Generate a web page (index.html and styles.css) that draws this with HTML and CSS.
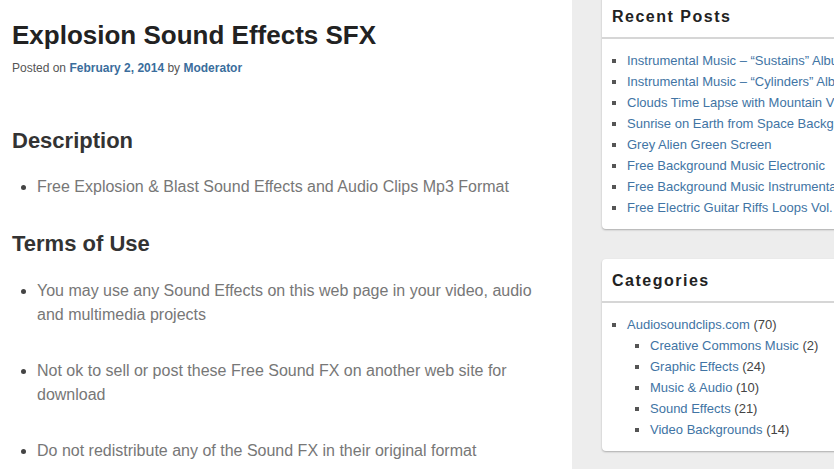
FILE: index.html
```html
<!DOCTYPE html>
<html lang="en">
<head>
<meta charset="utf-8">
<title>Explosion Sound Effects SFX</title>
<link rel="stylesheet" href="styles.css">
</head>
<body>
<div class="page">
  <main class="content">
    <h1 class="entry-title">Explosion Sound Effects SFX</h1>
    <div class="entry-meta">Posted on <a href="#">February 2, 2014</a> by <a href="#">Moderator</a></div>
    <h2 class="section-title">Description</h2>
    <ul class="entry-list">
      <li>Free Explosion &amp; Blast Sound Effects and Audio Clips Mp3 Format</li>
    </ul>
    <h2 class="section-title terms">Terms of Use</h2>
    <ul class="entry-list terms-list">
      <li>You may use any Sound Effects on this web page in your video, audio and multimedia projects</li>
      <li>Not ok to sell or post these Free Sound FX on another web site for download</li>
      <li>Do not redistribute any of the Sound FX in their original format</li>
    </ul>
  </main>
  <aside class="sidebar">
    <section class="widget first">
      <h3 class="widget-title">Recent Posts</h3>
      <ul class="widget-list">
        <li><a href="#">Instrumental Music – “Sustains” Album</a></li>
        <li><a href="#">Instrumental Music – “Cylinders” Album</a></li>
        <li><a href="#">Clouds Time Lapse with Mountain View</a></li>
        <li><a href="#">Sunrise on Earth from Space Background</a></li>
        <li><a href="#">Grey Alien Green Screen</a></li>
        <li><a href="#">Free Background Music Electronic</a></li>
        <li><a href="#">Free Background Music Instrumental</a></li>
        <li><a href="#">Free Electric Guitar Riffs Loops Vol. 1</a></li>
      </ul>
    </section>
    <section class="widget">
      <h3 class="widget-title">Categories</h3>
      <ul class="widget-list">
        <li><a href="#">Audiosoundclips.com</a> (70)
          <ul class="children">
            <li><a href="#">Creative Commons Music</a> (2)</li>
            <li><a href="#">Graphic Effects</a> (24)</li>
            <li><a href="#">Music &amp; Audio</a> (10)</li>
            <li><a href="#">Sound Effects</a> (21)</li>
            <li><a href="#">Video Backgrounds</a> (14)</li>
          </ul>
        </li>
      </ul>
    </section>
  </aside>
</div>
</body>
</html>
```

FILE: styles.css
```css
html, body {
  margin: 0;
  padding: 0;
  overflow: hidden;
  background: #fff;
  font-family: "Liberation Sans", Arial, sans-serif;
}

a {
  text-decoration: none;
  color: #3d70a0;
}

.page {
  display: grid;
  grid-template-columns: 572px 1fr;
  min-height: 469px;
}

.content {
  padding: 20px 12px 0 12px;
  background: #fff;
}

.entry-title {
  margin: 0;
  font-size: 26px;
  line-height: 31px;
  font-weight: bold;
  color: #222;
}

.entry-meta {
  margin-top: 8px;
  font-size: 12px;
  line-height: 18px;
  color: #555;
}

.entry-meta a {
  font-weight: bold;
  color: #3a6d9c;
}

.section-title {
  margin: 51px 0 0 0;
  font-size: 22px;
  line-height: 26px;
  font-weight: bold;
  color: #333;
}

.section-title.terms {
  margin-top: 32px;
}

.entry-list {
  margin: 21px 0 0 0;
  padding-left: 25px;
  font-size: 16px;
  line-height: 24px;
  color: #777;
}

.terms-list {
  margin-top: 22px;
}

.entry-list li + li {
  margin-top: 32px;
}

.entry-list li::marker {
  color: #444;
}

.sidebar {
  background: #ededed;
  padding-left: 30px;
  overflow: hidden;
}

.widget {
  width: 320px;
  background: #fff;
  border-radius: 4px;
  box-shadow: 0 1px 2px rgba(0, 0, 0, 0.28);
  margin-top: 30px;
}

.widget.first {
  margin-top: -5px;
}

.widget-title {
  margin: 0;
  padding: 11px 10px 9px 10px;
  font-size: 16px;
  line-height: 22px;
  font-weight: bold;
  letter-spacing: 1.5px;
  color: #222;
  border-bottom: 2px solid #d6d6d6;
}

.widget-list {
  margin: 0;
  padding: 10.5px 10px 11.5px 25px;
  list-style: square;
  font-size: 13px;
  line-height: 21px;
  color: #444;
  white-space: nowrap;
}

.widget-list a {
  color: #4174a4;
}

.widget-list li::marker {
  color: #555;
}

.widget-list .children {
  margin: 0;
  padding-left: 23px;
  list-style: square;
}
```
